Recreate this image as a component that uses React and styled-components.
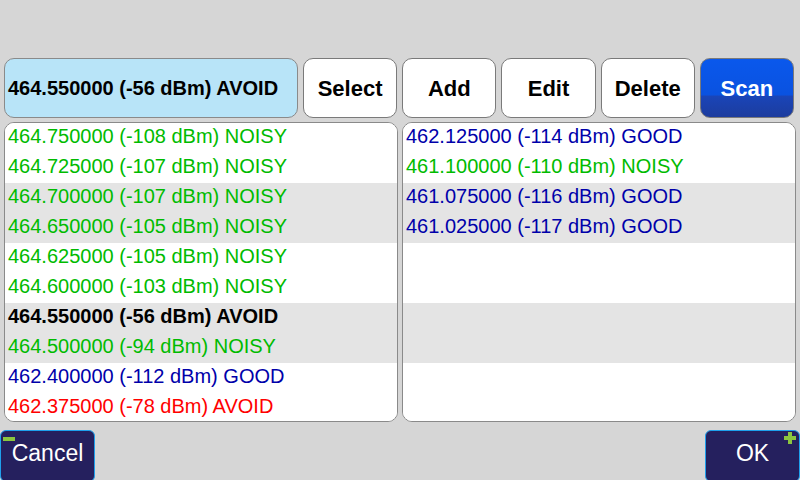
import React from "react";
import styled, { createGlobalStyle } from "styled-components";

const Global = createGlobalStyle`
  html, body { margin: 0; padding: 0; background: #d6d6d6; }
  body { font-family: "Liberation Sans", Arial, sans-serif; }
  * { box-sizing: border-box; }
`;

const Screen = styled.div`
  width: 800px;
  height: 480px;
  background: #d6d6d6;
  display: flex;
  flex-direction: column;
  padding-top: 58px;
  overflow: hidden;
`;

const Toolbar = styled.div`
  display: flex;
  flex: none;
  gap: 5px;
  height: 60px;
  padding: 0 6px 0 4px;
`;

const Current = styled.div`
  width: 294px;
  background: #b8e4f8;
  border: 1px solid #8a8a8a;
  border-radius: 10px;
  display: flex;
  align-items: center;
  padding-left: 3px;
  font-weight: bold;
  font-size: 20px;
  color: #000;
`;

const Button = styled.div`
  flex: 1;
  border: 1px solid #7a7a7a;
  border-radius: 10px;
  display: flex;
  align-items: center;
  justify-content: center;
  font-weight: bold;
  font-size: 22px;
  padding-top: 2px;
  color: ${p => (p.$primary ? "#fff" : "#000")};
  background: ${p =>
    p.$primary
      ? "linear-gradient(#0a58ec 0%, #0a52e0 62%, #1a45b8 64%, #1c3c9e 100%)"
      : "#fff"};
`;

const Lists = styled.div`
  display: flex;
  flex: none;
  gap: 4px;
  margin-top: 4px;
  padding: 0 4px;
  height: 300px;
`;

const List = styled.div`
  flex: 1;
  background: #fff;
  border: 1px solid #8a8a8a;
  border-radius: 10px;
  overflow: hidden;
  display: flex;
  flex-direction: column;
`;

const colors = {
  NOISY: "#00bb00",
  GOOD: "#0000aa",
  AVOID: "#ff0000",
  SEL: "#000",
};

const Row = styled.div`
  height: 30px;
  flex: none;
  display: flex;
  align-items: center;
  padding: 0 0 3px 3px;
  font-size: 20px;
  background: ${p => (p.$shaded ? "#e4e4e4" : "#fff")};
  color: ${p => colors[p.$kind] || "#000"};
  font-weight: ${p => (p.$kind === "SEL" ? "bold" : "normal")};
`;

const Footer = styled.div`
  display: flex;
  flex: none;
  justify-content: space-between;
  margin-top: 8px;
`;

const NavButton = styled.div`
  position: relative;
  width: 95px;
  height: 52px;
  background: #25205e;
  border: 1px solid #1ea0ec;
  border-radius: 6px;
  color: #fff;
  font-size: 23px;
  display: flex;
  align-items: center;
  justify-content: center;
  padding-bottom: 5px;
`;

const Minus = styled.span`
  position: absolute;
  left: 2px;
  top: 6px;
  width: 12px;
  height: 4px;
  background: #8cc63f;
`;

const Plus = styled.span`
  position: absolute;
  right: 3px;
  top: 1px;
  width: 12px;
  height: 12px;
  &::before, &::after {
    content: "";
    position: absolute;
    background: #8cc63f;
  }
  &::before { left: 0; top: 4px; width: 12px; height: 4px; }
  &::after { left: 4px; top: 0; width: 4px; height: 12px; }
`;

const left = [
  ["464.750000 (-108 dBm) NOISY", "NOISY"],
  ["464.725000 (-107 dBm) NOISY", "NOISY"],
  ["464.700000 (-107 dBm) NOISY", "NOISY"],
  ["464.650000 (-105 dBm) NOISY", "NOISY"],
  ["464.625000 (-105 dBm) NOISY", "NOISY"],
  ["464.600000 (-103 dBm) NOISY", "NOISY"],
  ["464.550000 (-56 dBm) AVOID", "SEL"],
  ["464.500000 (-94 dBm) NOISY", "NOISY"],
  ["462.400000 (-112 dBm) GOOD", "GOOD"],
  ["462.375000 (-78 dBm) AVOID", "AVOID"],
];

const right = [
  ["462.125000 (-114 dBm) GOOD", "GOOD"],
  ["461.100000 (-110 dBm) NOISY", "NOISY"],
  ["461.075000 (-116 dBm) GOOD", "GOOD"],
  ["461.025000 (-117 dBm) GOOD", "GOOD"],
  ["", ""],
  ["", ""],
  ["", ""],
  ["", ""],
  ["", ""],
  ["", ""],
];

const renderRows = rows =>
  rows.map(([t, k], i) => (
    <Row key={i} $kind={k} $shaded={Math.floor(i / 2) % 2 === 1}>
      {t}
    </Row>
  ));

export default function App() {
  return (
    <>
      <Global />
      <Screen>
        <Toolbar>
          <Current>464.550000 (-56 dBm) AVOID</Current>
          <Button>Select</Button>
          <Button>Add</Button>
          <Button>Edit</Button>
          <Button>Delete</Button>
          <Button $primary>Scan</Button>
        </Toolbar>
        <Lists>
          <List>{renderRows(left)}</List>
          <List>{renderRows(right)}</List>
        </Lists>
        <Footer>
          <NavButton>
            <Minus />
            Cancel
          </NavButton>
          <NavButton>
            <Plus />
            OK
          </NavButton>
        </Footer>
      </Screen>
    </>
  );
}
